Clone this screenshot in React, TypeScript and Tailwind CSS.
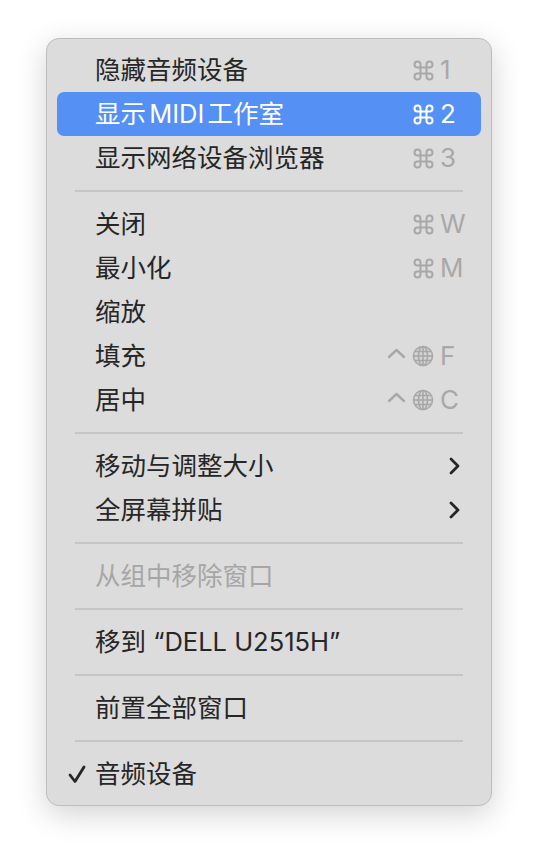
import React from 'react';

type Item =
  | { kind: 'sep' }
  | {
      kind: 'item';
      label: string;
      mods?: ('cmd' | 'ctrl' | 'globe')[];
      keyChar?: string;
      submenu?: boolean;
      disabled?: boolean;
      active?: boolean;
      checked?: boolean;
      tight?: boolean;
    };

const items: Item[] = [
  { kind: 'item', label: '隐藏音频设备', mods: ['cmd'], keyChar: '1' },
  { kind: 'item', label: '显示 MIDI 工作室', mods: ['cmd'], keyChar: '2', active: true, tight: true },
  { kind: 'item', label: '显示网络设备浏览器', mods: ['cmd'], keyChar: '3' },
  { kind: 'sep' },
  { kind: 'item', label: '关闭', mods: ['cmd'], keyChar: 'W' },
  { kind: 'item', label: '最小化', mods: ['cmd'], keyChar: 'M' },
  { kind: 'item', label: '缩放' },
  { kind: 'item', label: '填充', mods: ['ctrl', 'globe'], keyChar: 'F' },
  { kind: 'item', label: '居中', mods: ['ctrl', 'globe'], keyChar: 'C' },
  { kind: 'sep' },
  { kind: 'item', label: '移动与调整大小', submenu: true },
  { kind: 'item', label: '全屏幕拼贴', submenu: true },
  { kind: 'sep' },
  { kind: 'item', label: '从组中移除窗口', disabled: true },
  { kind: 'sep' },
  { kind: 'item', label: '移到 “DELL U2515H”' },
  { kind: 'sep' },
  { kind: 'item', label: '前置全部窗口' },
  { kind: 'sep' },
  { kind: 'item', label: '音频设备', checked: true },
];

const CmdIcon = () => (
  <svg width="21" height="21" viewBox="0 0 21 21" fill="none" stroke="currentColor" strokeWidth="2">
    <path d="M7.5 7.5 H13.5 V13.5 H7.5 Z" />
    <path d="M7.5 7.5 V4.5 A3 3 0 1 0 4.5 7.5 H7.5" />
    <path d="M13.5 7.5 V4.5 A3 3 0 1 1 16.5 7.5 H13.5" />
    <path d="M7.5 13.5 V16.5 A3 3 0 1 1 4.5 13.5 H7.5" />
    <path d="M13.5 13.5 V16.5 A3 3 0 1 0 16.5 13.5 H13.5" />
  </svg>
);

const CtrlIcon = () => (
  <svg width="19" height="20" viewBox="0 0 19 20" fill="none" stroke="currentColor" strokeWidth="2.4" strokeLinecap="round" strokeLinejoin="round">
    <path d="M2 11 L9.5 4 L17 11" />
  </svg>
);

const GlobeIcon = () => (
  <svg width="22" height="22" viewBox="0 0 22 22" fill="none" stroke="currentColor" strokeWidth="1.6">
    <circle cx="11" cy="11" r="9.5" fill="currentColor" fillOpacity="0.15" />
    <ellipse cx="11" cy="11" rx="4.5" ry="9.5" />
    <path d="M11 1.5 V20.5" />
    <path d="M1.5 11 H20.5" />
    <path d="M3 6.5 H19" />
    <path d="M3 15.5 H19" />
  </svg>
);

const Chevron = () => (
  <svg width="11" height="18" viewBox="0 0 11 18" fill="none" stroke="currentColor" strokeWidth="2.8" strokeLinecap="round" strokeLinejoin="round">
    <path d="M2 2 L9 9 L2 16" />
  </svg>
);

const Check = () => (
  <svg width="18" height="19" viewBox="0 0 18 19" fill="none" stroke="currentColor" strokeWidth="2.8" strokeLinecap="round" strokeLinejoin="round">
    <path d="M2 10 L7 16.5 L16 2" />
  </svg>
);

export default function App() {
  return (
    <div
      className="w-[538px] h-[860px] bg-white pt-[38px] pl-[46px]"
      style={{ fontFamily: 'Inter, "Noto Sans CJK SC", sans-serif' }}
    >
      <div className="w-[446px] rounded-[13px] bg-[#dcdcdc] border border-[#bdbdbd] py-[9px] shadow-[0_8px_30px_rgba(0,0,0,0.18)]">
        {items.map((it, i) => {
          if (it.kind === 'sep') {
            return (
              <div key={i} className="h-[22px] flex items-center mx-[28px]">
                <div className="h-[2px] w-full bg-[#c6c6c6]" />
              </div>
            );
          }
          const textColor = it.active
            ? 'text-white'
            : it.disabled
              ? 'text-[#a6a6a6]'
              : 'text-[#262626]';
          const shortColor = it.active ? 'text-white' : 'text-[#a8a8a8]';
          return (
            <div
              key={i}
              className={`h-[44px] mx-[10px] rounded-[7px] flex items-center pr-[21px] ${
                it.active ? 'bg-[#5590f4]' : ''
              }`}
            >
              <div className={`w-[38px] pl-[11px] flex items-center ${textColor}`}>
                {it.checked ? <Check /> : null}
              </div>
              <div
                className={`flex-1 text-[25.5px] leading-none ${textColor} ${
                  it.tight ? '[word-spacing:-4px]' : ''
                }`}
              >
                {it.label}
              </div>
              {it.mods ? (
                <div className={`flex items-center ${shortColor}`}>
                  <div className="flex items-center justify-end gap-[6px]">
                    {it.mods.map((m, j) =>
                      m === 'cmd' ? (
                        <CmdIcon key={j} />
                      ) : m === 'ctrl' ? (
                        <CtrlIcon key={j} />
                      ) : (
                        <GlobeIcon key={j} />
                      )
                    )}
                  </div>
                  <div className="w-[20px] ml-[6px] text-[26px] leading-none">{it.keyChar}</div>
                </div>
              ) : null}
              {it.submenu ? (
                <div className="w-[20px] flex justify-end text-[#262626]">
                  <Chevron />
                </div>
              ) : null}
            </div>
          );
        })}
      </div>
    </div>
  );
}
